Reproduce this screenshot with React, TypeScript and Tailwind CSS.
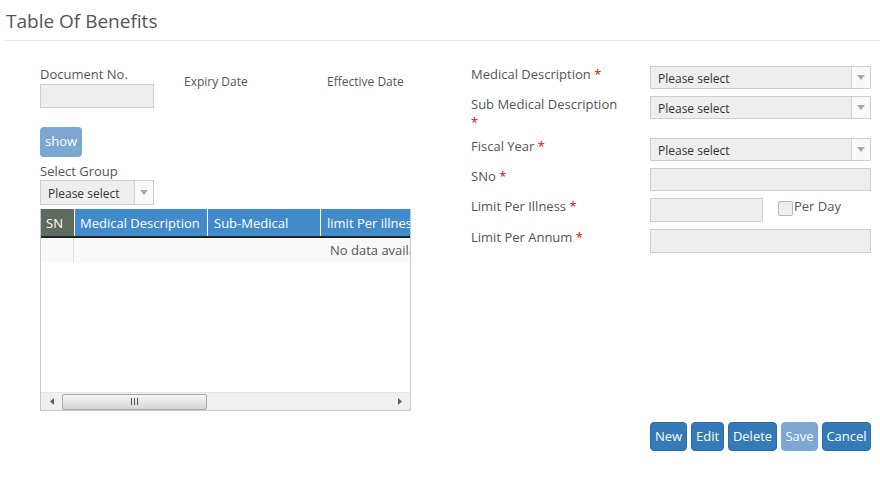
import React from 'react';

const font = "font-['Open_Sans','Liberation_Sans',sans-serif]";

function Arrow() {
  return (
    <div className="flex h-full w-[19px] items-center justify-center border-l border-[#d4d4d4] bg-[#f8f8f8]">
      <svg width="8" height="5" viewBox="0 0 8 5">
        <path d="M0 0 L8 0 L4 5 Z" fill="#a9a9a9" />
      </svg>
    </div>
  );
}

function Select({ className = '' }: { className?: string }) {
  return (
    <div className={`flex items-center border border-[#cfcfcf] bg-[#eeeeee] ${className}`}>
      <span className="flex-1 pl-[7px] pt-[3px] text-[12px] text-[#333]">Please select</span>
      <Arrow />
    </div>
  );
}

function Field({ label, star = true, children }: { label: React.ReactNode; star?: boolean; children: React.ReactNode }) {
  return (
    <div className="flex items-start">
      <div className="-mt-[1px] w-[150px] text-[13px] leading-[18px] text-[#555]">
        {label}
        {star && <span className="text-[#e00]"> *</span>}
      </div>
      <div className="ml-[29px] flex items-start">{children}</div>
    </div>
  );
}

function Btn({ children, light = false, w }: { children: React.ReactNode; light?: boolean; w: string }) {
  return (
    <button
      className={`h-[29px] rounded-[4px] border text-[13px] text-white ${w} ${
        light ? 'border-[#7ba7d2] bg-[#7ba7d2]' : 'border-[#2e6da4] bg-[#337ab7]'
      }`}
    >
      {children}
    </button>
  );
}

export default function App() {
  return (
    <div className={`${font} h-[489px] w-[880px] bg-white`}>
      <div className="ml-[5px] h-[41px] border-b border-[#e6e6e6] pl-[1px] pt-[8px] text-[19px] leading-[26px] text-[#555]">
        Table Of Benefits
      </div>

      <div className="flex pt-[24px]">
        {/* left side */}
        <div className="ml-[40px] w-[371px]">
          <div className="flex items-start">
            <div className="w-[114px]">
              <div className="text-[13px] leading-[18px] text-[#555]">Document No.</div>
              <div className="mt-[1px] h-[24px] border border-[#cfcfcf] bg-[#eeeeee]" />
            </div>
            <div className="ml-[30px] mt-[8px] w-[143px] text-[12px] leading-[18px] text-[#555]">Expiry Date</div>
            <div className="mt-[8px] text-[12px] leading-[18px] text-[#555]">Effective Date</div>
          </div>

          <button className="mt-[19px] h-[30px] w-[42px] rounded-[4px] bg-[#7ba7d2] text-[13px] text-white">show</button>

          <div className="mt-[6px] text-[13px] leading-[17px] text-[#555]">Select Group</div>
          <Select className="h-[25px] w-[114px]" />

          <div className="mt-[4px] flex h-[202px] flex-col overflow-hidden border-x border-b border-[#c8c8c8]">
            <div className="flex h-[29px] shrink-0 border-b-2 border-[#222] text-[13px] text-white whitespace-nowrap">
              <div className="flex w-[33px] shrink-0 items-center bg-[#5e6b5e] pl-[5px] pt-[2px]">SN</div>
              <div className="flex w-[133px] shrink-0 items-center border-l border-white bg-[#428bca] pl-[5px] pt-[2px]">Medical Description</div>
              <div className="flex w-[113px] shrink-0 items-center border-l border-white bg-[#428bca] pl-[6px] pt-[2px]">Sub-Medical</div>
              <div className="flex w-[120px] shrink-0 items-center border-l border-white bg-[#428bca] pl-[6px] pt-[2px]">limit Per illness</div>
            </div>
            <div className="flex h-[24px] shrink-0 bg-[#f9f9f9] text-[13px] text-[#555] whitespace-nowrap">
              <div className="w-[33px] shrink-0 border-r border-[#ddd]" />
              <div className="flex items-center pl-[256px] pt-[2px]">No data available in table</div>
            </div>
            <div className="flex-1 bg-white" />
            <div className="flex h-[18px] shrink-0 items-center border-t border-[#e4e4e4] bg-[#f0f0f0]">
              <div className="flex w-[21px] items-center justify-center">
                <svg width="4" height="7" viewBox="0 0 4 7">
                  <path d="M4 0 L0 3.5 L4 7 Z" fill="#606060" />
                </svg>
              </div>
              <div className="flex h-[16px] w-[145px] items-center justify-center rounded-[2px] border border-[#a8a8a8] bg-gradient-to-b from-[#f4f4f4] to-[#d6d6d6]">
                <svg width="7" height="7" viewBox="0 0 7 7">
                  <path d="M0.5 0 V7 M3.5 0 V7 M6.5 0 V7" stroke="#555" strokeWidth="1" />
                </svg>
              </div>
              <div className="flex-1" />
              <div className="flex w-[20px] items-center justify-center">
                <svg width="4" height="7" viewBox="0 0 4 7">
                  <path d="M0 0 L4 3.5 L0 7 Z" fill="#606060" />
                </svg>
              </div>
            </div>
          </div>
        </div>

        {/* right side */}
        <div className="ml-[60px] w-[400px] pt-[1px]">
          <div className="flex flex-col gap-[7px]">
            <Field label="Medical Description">
              <Select className="h-[23px] w-[221px]" />
            </Field>
            <Field label="Sub Medical Description">
              <Select className="h-[23px] w-[221px]" />
            </Field>
            <Field label="Fiscal Year">
              <Select className="h-[23px] w-[221px]" />
            </Field>
            <Field label="SNo">
              <div className="h-[23px] w-[221px] border border-[#cfcfcf] bg-[#eeeeee]" />
            </Field>
            <Field label="Limit Per Illness">
              <div className="h-[24px] w-[113px] border border-[#cfcfcf] bg-[#eeeeee]" />
              <div className="ml-[15px] mt-[3px] h-[15px] w-[15px] rounded-[2px] border border-[#b8b8b8] bg-[#eeeeee]" />
              <span className="-mt-[1px] ml-[1px] text-[13px] leading-[18px] text-[#555]">Per Day</span>
            </Field>
            <Field label="Limit Per Annum">
              <div className="h-[24px] w-[221px] border border-[#cfcfcf] bg-[#eeeeee]" />
            </Field>
          </div>

          <div className="mt-[169px] flex justify-end gap-[4px]">
            <Btn w="w-[37px]">New</Btn>
            <Btn w="w-[33px]">Edit</Btn>
            <Btn w="w-[49px]">Delete</Btn>
            <Btn w="w-[37px]" light>Save</Btn>
            <Btn w="w-[49px]">Cancel</Btn>
          </div>
        </div>
      </div>
    </div>
  );
}
